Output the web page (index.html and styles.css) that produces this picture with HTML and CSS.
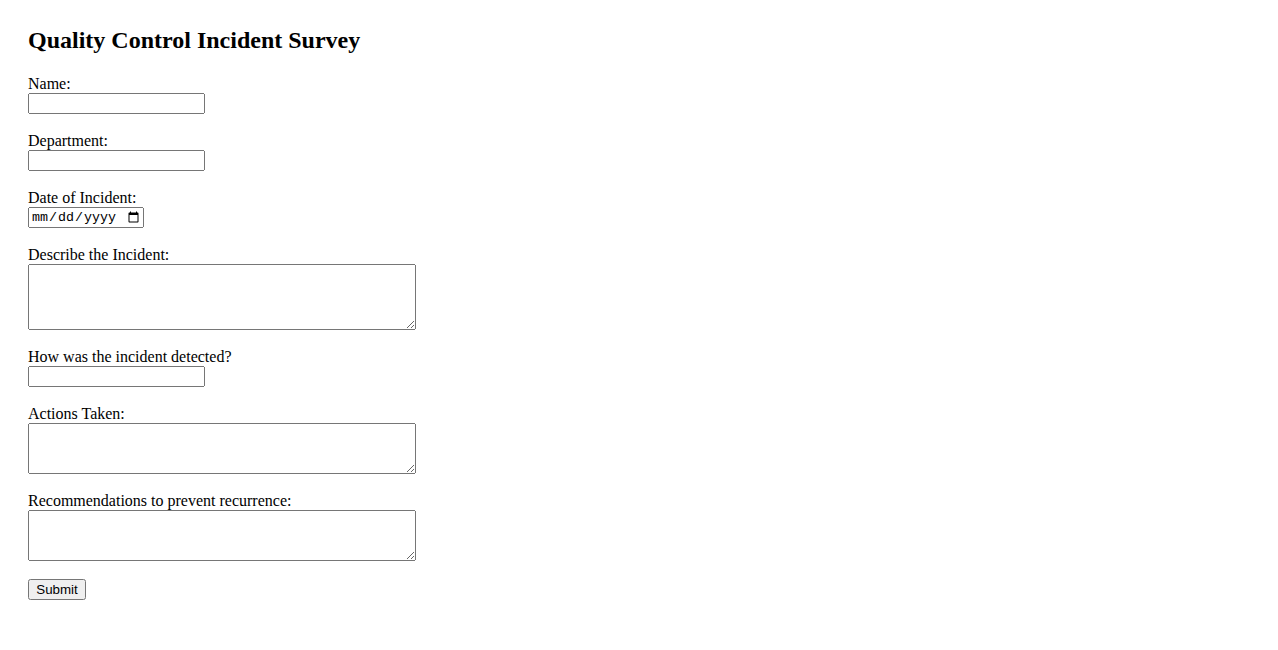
FILE: index.html
```html
<!DOCTYPE html>
<html lang="en">
<head>
  <meta charset="UTF-8">
  <meta name="viewport" content="width=device-width, initial-scale=1.0">
  <title>Quality Control Incident Survey</title>
  <link rel="stylesheet" href="styles.css">
</head>
<body>
  <div class="survey">
    <h2>Quality Control Incident Survey</h2>
    <form>
      <div class="field">
        <label for="name">Name:</label>
        <input type="text" id="name" name="name">
      </div>
      <div class="field">
        <label for="department">Department:</label>
        <input type="text" id="department" name="department">
      </div>
      <div class="field">
        <label for="incidentDate">Date of Incident:</label>
        <input type="date" id="incidentDate" name="incidentDate" class="date">
      </div>
      <div class="field">
        <label for="description">Describe the Incident:</label>
        <textarea id="description" name="description" class="tall"></textarea>
      </div>
      <div class="field">
        <label for="detection">How was the incident detected?</label>
        <input type="text" id="detection" name="detection">
      </div>
      <div class="field">
        <label for="actions">Actions Taken:</label>
        <textarea id="actions" name="actions"></textarea>
      </div>
      <div class="field">
        <label for="recommendations">Recommendations to prevent recurrence:</label>
        <textarea id="recommendations" name="recommendations"></textarea>
      </div>
      <button type="submit">Submit</button>
    </form>
  </div>
</body>
</html>
```

FILE: styles.css
```css
body {
  margin: 8px;
  font-family: "Liberation Serif", "Times New Roman", serif;
  font-size: 16px;
  color: #000;
  background: #fff;
}
.survey {
  padding: 20px;
}
h2 {
  margin: 0 0 23px;
  font-size: 24px;
  line-height: 24px;
}
.field {
  margin-bottom: 18px;
}
label {
  display: block;
  line-height: 18px;
}
input, textarea, button {
  display: block;
  margin: 0;
  box-sizing: border-box;
}
input {
  width: 177px;
  height: 21px;
}
input.date {
  width: 116px;
  font-family: "Liberation Mono", monospace;
  font-size: 13.33px;
}
textarea {
  width: 388px;
  height: 51px;
}
textarea.tall {
  height: 66px;
}
button {
  width: 58px;
  height: 21px;
  font-family: "Liberation Sans", Arial, sans-serif;
  font-size: 13.33px;
}
```
